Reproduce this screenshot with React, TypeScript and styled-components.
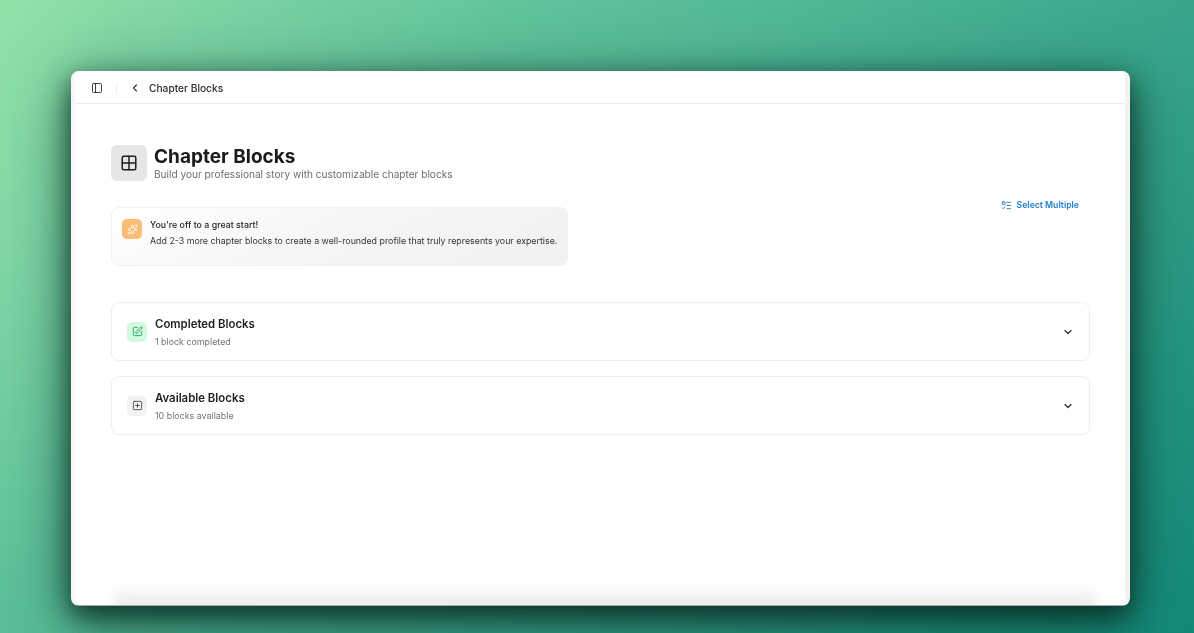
import React from "react";
import styled, { createGlobalStyle } from "styled-components";
import {
  ChevronDown,
  ChevronLeft,
  Grid2x2,
  ListTodo,
  PanelLeft,
  Sparkles,
  SquarePen,
  SquarePlus,
} from "lucide-react";

const GlobalStyle = createGlobalStyle`
  html, body {
    margin: 0;
    height: 100%;
    overflow: hidden;
  }
  body {
    font-family: Inter, "Liberation Sans", sans-serif;
    color: #1b1b1d;
  }
`;

const blocks = [
  {
    title: "Completed Blocks",
    subtitle: "1 block completed",
    tone: "green" as const,
    icon: <SquarePen size={11} strokeWidth={2} />,
  },
  {
    title: "Available Blocks",
    subtitle: "10 blocks available",
    tone: "gray" as const,
    icon: <SquarePlus size={11} strokeWidth={1.8} />,
  },
];

const App = () => {
  return (
    <Page>
      <GlobalStyle />
      <Window>
        <TopBar>
          <BarButton>
            <PanelLeft size={12} strokeWidth={1.8} />
          </BarButton>
          <Divider />
          <BarButton>
            <ChevronLeft size={12} strokeWidth={2.2} />
          </BarButton>
          <BarTitle>Chapter Blocks</BarTitle>
        </TopBar>
        <Content>
          <TopRow>
            <div>
              <Heading>
                <HeadingIcon>
                  <Grid2x2 size={18} strokeWidth={2} />
                </HeadingIcon>
                <div>
                  <Title>Chapter Blocks</Title>
                  <Subtitle>
                    Build your professional story with customizable chapter
                    blocks
                  </Subtitle>
                </div>
              </Heading>
              <Banner>
                <BannerIcon>
                  <Sparkles size={11} strokeWidth={2} />
                </BannerIcon>
                <div>
                  <BannerTitle>You're off to a great start!</BannerTitle>
                  <BannerText>
                    Add 2-3 more chapter blocks to create a well-rounded profile
                    that truly represents your expertise.
                  </BannerText>
                </div>
              </Banner>
            </div>
            <SelectButton>
              <ListTodo size={11} strokeWidth={2} />
              Select Multiple
            </SelectButton>
          </TopRow>
          <BlockList>
            {blocks.map((block) => (
              <BlockCard key={block.title}>
                <BlockIcon $tone={block.tone}>{block.icon}</BlockIcon>
                <BlockText>
                  <BlockTitle>{block.title}</BlockTitle>
                  <BlockSubtitle>{block.subtitle}</BlockSubtitle>
                </BlockText>
                <ChevronDown size={12} strokeWidth={2.4} color="#2a2a2e" />
              </BlockCard>
            ))}
          </BlockList>
        </Content>
        <BottomFade />
      </Window>
    </Page>
  );
};

const Page = styled.div`
  width: 1194px;
  height: 633px;
  box-sizing: border-box;
  padding: 71px 64px 27px 71px;
  background:
    radial-gradient(ellipse 120px 420px at 0% 30%, rgba(150, 232, 175, 0.3), transparent),
    linear-gradient(135deg, #90e0a9 0%, #62c49b 28%, #3faa8f 60%, #128a78 100%);
`;

const Window = styled.div`
  position: relative;
  display: flex;
  flex-direction: column;
  height: 100%;
  box-sizing: border-box;
  overflow: hidden;
  background: #fff;
  border-left: 4px solid #f6f8f7;
  border-right: 5px solid #f3f3f3;
  border-bottom: 1px solid #a9a9a9;
  border-radius: 8px;
  box-shadow:
    0 10px 26px rgba(6, 42, 34, 0.85),
    0 16px 64px rgba(6, 42, 34, 0.6);
`;

const TopBar = styled.header`
  display: flex;
  align-items: center;
  height: 33px;
  flex-shrink: 0;
  box-sizing: border-box;
  padding: 2px 0 0 16px;
  border-bottom: 1px solid #ececee;
`;

const BarButton = styled.span`
  display: flex;
  color: #2f2f33;
`;

const Divider = styled.span`
  width: 1px;
  height: 11px;
  margin: 0 12px 0 13px;
  background: #ededef;
`;

const BarTitle = styled.span`
  margin-left: 8px;
  font-size: 10.2px;
  font-weight: 500;
  color: #2b2b2f;
  filter: blur(0.3px);
`;

const Content = styled.main`
  padding: 41px 35px 0 36px;
`;

const TopRow = styled.div`
  display: flex;
  justify-content: space-between;
  align-items: flex-start;
`;

const Heading = styled.div`
  display: flex;
  align-items: center;
  gap: 7px;
`;

const HeadingIcon = styled.div`
  display: flex;
  align-items: center;
  justify-content: center;
  width: 36px;
  height: 36px;
  border-radius: 6px;
  background: #e6e6e6;
  color: #1f1f22;
`;

const Title = styled.h1`
  margin: 0;
  padding-top: 1px;
  font-size: 19px;
  line-height: 22px;
  font-weight: 700;
  color: #1b1b1d;
  filter: blur(0.3px);
`;

const Subtitle = styled.p`
  margin: -1px 0 0;
  font-size: 10.1px;
  line-height: 14px;
  color: #6e6e73;
  filter: blur(0.3px);
`;

const Banner = styled.section`
  display: flex;
  gap: 8px;
  width: 457px;
  height: 59px;
  box-sizing: border-box;
  margin-top: 26px;
  padding: 11px 10px;
  border: 1px solid #f1f1f1;
  border-radius: 8px;
  background: linear-gradient(155deg, #ffffff 0%, #f6f6f6 45%, #f1f1f1 100%);
`;

const BannerIcon = styled.div`
  display: flex;
  align-items: center;
  justify-content: center;
  flex-shrink: 0;
  width: 20px;
  height: 20px;
  border-radius: 5px;
  background: #fbbd74;
  color: #fff;
`;

const BannerTitle = styled.div`
  font-size: 8.85px;
  line-height: 12px;
  font-weight: 500;
  color: #1f1f22;
  filter: blur(0.3px);
`;

const BannerText = styled.div`
  margin-top: 4px;
  font-size: 8.83px;
  line-height: 12px;
  white-space: nowrap;
  color: #333336;
  filter: blur(0.3px);
`;

const SelectButton = styled.button`
  display: flex;
  align-items: center;
  gap: 5px;
  margin: 54px 11px 0 0;
  padding: 0;
  border: none;
  background: none;
  font-family: inherit;
  font-size: 8.7px;
  line-height: 12px;
  font-weight: 600;
  color: #1c7fd1;
  filter: blur(0.3px);
`;

const BlockList = styled.div`
  display: flex;
  flex-direction: column;
  gap: 15px;
  margin-top: 36px;
`;

const BlockCard = styled.section`
  display: flex;
  align-items: center;
  height: 59px;
  box-sizing: border-box;
  padding: 0 15px;
  border: 1px solid #eeeeef;
  border-radius: 8px;
  background: #fff;
`;

const BlockIcon = styled.div<{ $tone: "green" | "gray" }>`
  display: flex;
  align-items: center;
  justify-content: center;
  width: 20px;
  height: 20px;
  border-radius: 5px;
  background: ${(p) => (p.$tone === "green" ? "#d3fadf" : "#f2f2f4")};
  color: ${(p) => (p.$tone === "green" ? "#27a35f" : "#3a3a3f")};
`;

const BlockText = styled.div`
  flex: 1;
  margin-left: 8px;
  padding-top: 1px;
`;

const BlockTitle = styled.div`
  font-size: 11.4px;
  line-height: 14px;
  font-weight: 600;
  color: #1f1f22;
  filter: blur(0.3px);
`;

const BlockSubtitle = styled.div`
  margin-top: 5px;
  font-size: 8.9px;
  line-height: 12px;
  color: #717176;
  filter: blur(0.3px);
`;

const BottomFade = styled.div`
  position: absolute;
  left: 40px;
  right: 30px;
  bottom: -6px;
  height: 26px;
  background: linear-gradient(180deg, rgba(236, 236, 236, 0), rgba(222, 222, 222, 0.85));
  filter: blur(6px);
`;

export default App;
